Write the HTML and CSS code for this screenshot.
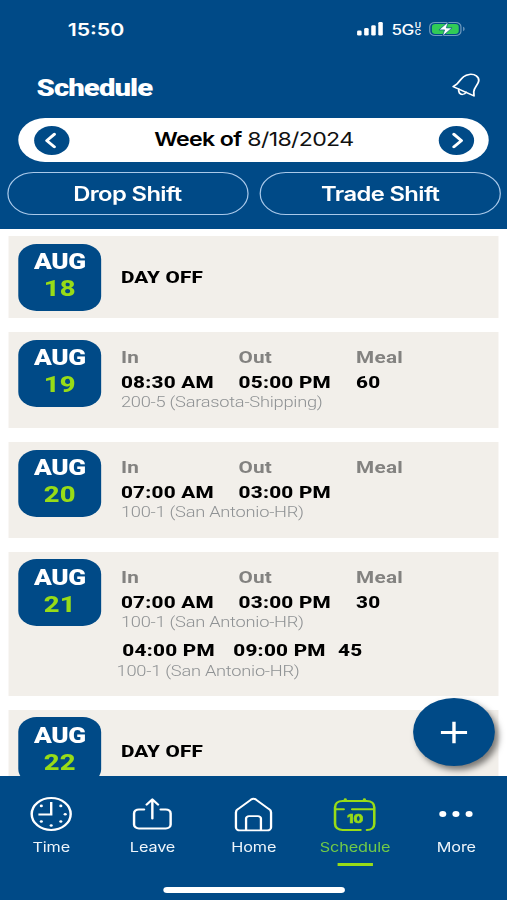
FILE: index.html
```html
<!DOCTYPE html>
<html lang="en">
<head>
<meta charset="utf-8">
<title>Schedule</title>
<link rel="stylesheet" href="styles.css">
</head>
<body>
<div class="screen">
  <header class="header">
    <div class="status">
      <span class="clock">15:50</span>
      <div class="indicators">
        <svg class="signal" width="22" height="14" viewBox="0 0 22 14" fill="#fff"><rect x="0" y="8.5" width="3.700" height="5" rx="1.2"/><rect x="5.8" y="6" width="3.700" height="7.5" rx="1.2"/><rect x="11.6" y="3.2" width="3.700" height="10.3" rx="1.2"/><rect x="17.4" y="0" width="3.700" height="13.5" rx="1.2"/></svg>
        <span class="network">5G</span>
        <span class="uc"><span>U</span><span>C</span></span>
        <svg class="battery" width="31" height="16" viewBox="0 0 31 16"><rect x=".6" y="1.4" width="25.6" height="13.2" rx="4.4" fill="none" stroke="#6f9abf" stroke-width="1"/><path d="M28 5.8c1.6.6 1.6 3.8 0 4.4z" fill="#6f9abf"/><rect x="2.4" y="3.1" width="22" height="9.8" rx="2.8" fill="#31cb57"/><path d="M15.8.8 8.2 8.9h4.6L11 15.2l7.9-8.3h-4.7z" fill="#fff" stroke="#004a87" stroke-width=".6"/></svg>
      </div>
    </div>
    <div class="title-row">
      <h1>Schedule</h1>
      <svg class="bell" width="25" height="26" viewBox="0 0 26 28" fill="none" stroke="#fff" stroke-width="1.6" stroke-linejoin="round" stroke-linecap="round"><path d="M1.500 15.800 5 12.800C8.500 8 10.500 3.200 15.800 2.600c5-.6 8.700 2.300 8.300 6.900-.4 4.200-4.500 7.200-4.400 11.800l.2 4.500z"/><path d="M6.500 18.500c-.7 3.300 1.100 5.800 3.300 5.600 1.500-.1 2.600-1 3.100-2.300"/></svg>
    </div>
    <div class="week">
      <span class="arrow"><svg width="29" height="29" viewBox="0 0 29 29"><path d="m16.600 8.300-6.200 6.300 6.200 6.300"/></svg></span>
      <span class="week-label"><b>Week of</b> 8/18/2024</span>
      <span class="arrow"><svg width="29" height="29" viewBox="0 0 29 29"><path d="m12.400 8.300 6.200 6.300-6.200 6.300"/></svg></span>
    </div>
    <div class="actions">
      <button class="drop">Drop Shift</button>
      <button class="trade">Trade Shift</button>
    </div>
  </header>

  <main class="days">
    <section class="card off">
      <div class="date"><span>AUG</span><b>18</b></div>
      <p class="day-off">DAY OFF</p>
    </section>
    <section class="card">
      <div class="date"><span>AUG</span><b>19</b></div>
      <div class="shifts">
        <div class="cols heads"><span>In</span><span>Out</span><span>Meal</span></div>
        <div class="cols times"><span>08:30 AM</span><span>05:00 PM</span><span>60</span></div>
        <p class="place">200-5 (Sarasota-Shipping)</p>
      </div>
    </section>
    <section class="card">
      <div class="date"><span>AUG</span><b>20</b></div>
      <div class="shifts">
        <div class="cols heads"><span>In</span><span>Out</span><span>Meal</span></div>
        <div class="cols times"><span>07:00 AM</span><span>03:00 PM</span></div>
        <p class="place">100-1 (San Antonio-HR)</p>
      </div>
    </section>
    <section class="card tall">
      <div class="date"><span>AUG</span><b>21</b></div>
      <div class="shifts">
        <div class="cols heads"><span>In</span><span>Out</span><span>Meal</span></div>
        <div class="cols times"><span>07:00 AM</span><span>03:00 PM</span><span>30</span></div>
        <p class="place">100-1 (San Antonio-HR)</p>
        <div class="cols times second"><span>04:00 PM</span><span>09:00 PM</span><span>45</span></div>
        <p class="place second-place">100-1 (San Antonio-HR)</p>
      </div>
    </section>
    <section class="card off">
      <div class="date"><span>AUG</span><b>22</b></div>
      <p class="day-off">DAY OFF</p>
    </section>
  </main>

  <div class="fab"><svg width="23" height="23" viewBox="0 0 24 24" stroke="#fff" stroke-width="2.900"><path d="M.8 12h22.400M12 .8v22.400"/></svg></div>

  <nav class="tabs">
    <a class="tab"><svg width="36" height="36" viewBox="0 0 36 36" fill="none" stroke="#fff" stroke-width="2"><circle cx="18" cy="18" r="16"/><path d="M18 6v12.500H7.500"/><g fill="#fff" stroke="none"><circle cx="25.900" cy="9.900" r="1.300"/><circle cx="29.500" cy="18.300" r="1.300"/><circle cx="25.900" cy="25.500" r="1.300"/><circle cx="18" cy="29.500" r="1.300"/><circle cx="9.900" cy="25.500" r="1.300"/><circle cx="9.900" cy="9.900" r="1.300"/></g></svg><span>Time</span></a>
    <a class="tab"><svg width="36" height="36" viewBox="0 0 36 36" fill="none" stroke="#fff" stroke-width="2" stroke-linecap="round" stroke-linejoin="round"><path d="M11.200 13.400H7a4 4 0 0 0-4 4v11a4 4 0 0 0 4 4h22a4 4 0 0 0 4-4v-11a4 4 0 0 0-4-4h-4.200M18 22.500V3.800M13.300 8.600 18 3.400l4.700 5.200"/></svg><span>Leave</span></a>
    <a class="tab"><svg width="36" height="36" viewBox="0 0 36 36" fill="none" stroke="#fff" stroke-width="1.900" stroke-linejoin="round"><path d="M3.600 16.400c0-1.500.6-2.500 1.700-3.300L16 3.600c1.300-1.100 2.700-1.100 4 0l10.700 9.500c1.100.8 1.700 1.800 1.700 3.300v14.800a3.200 3.200 0 0 1-3.200 3.200H6.800a3.200 3.200 0 0 1-3.200-3.200z"/><path d="M11.900 34V22.600a2.500 2.500 0 0 1 2.500-2.500h7.200a2.500 2.500 0 0 1 2.500 2.500V34"/></svg><span>Home</span></a>
    <a class="tab active"><svg width="36" height="36" viewBox="0 0 36 36" fill="none" stroke="#98dc17" stroke-width="2.100" stroke-linecap="round"><path d="M22.800 34H8.200c-3.800 0-6.300-2.500-6.300-6.300V11.500C1.900 7.500 4.200 5 8.200 5h19.600c4 0 6.300 2.500 6.300 6.500v16.200c0 3.800-2.500 6.300-6 6.300M2.500 13.200H9M16 13.200h17.500"/><path d="M10.300 4.200V3.500M26 4.200V3.500" stroke-width="2.600"/><text x="18.400" y="27" text-anchor="middle" fill="#98dc17" stroke="#98dc17" stroke-width=".6" class="cal-day">10</text></svg><span>Schedule</span></a>
    <a class="tab"><svg width="36" height="36" viewBox="0 0 36 36" fill="#fff"><circle cx="7.300" cy="18" r="2.900"/><circle cx="18.100" cy="18" r="2.900"/><circle cx="28.900" cy="18" r="2.900"/></svg><span>More</span></a>
    <div class="home-bar"></div>
  </nav>
</div>
</body>
</html>
```
FILE: styles.css
```css
:root {
  --blue: #004a87;
  --green: #98dc17;
}

* { box-sizing: border-box; }

html, body {
  margin: 0;
  height: 900px;
  overflow: hidden;
  background: #fff;
}

p, h1 { margin: 0; }

/* 416px design, stretched to fill the 507px viewport */
.screen {
  position: relative;
  display: flex;
  flex-direction: column;
  width: 416px;
  height: 900px;
  overflow: hidden;
  transform: scaleX(1.21875);
  transform-origin: 0 0;
  font-family: Roboto, "Liberation Sans", sans-serif;
}

.header {
  flex: none;
  height: 229.400px;
  background: var(--blue);
  color: #fff;
}

.status {
  display: flex;
  align-items: center;
  justify-content: space-between;
  height: 58px;
  padding: 0 33px 0 55.500px;
  font-family: Inter, sans-serif;
}

.clock {
  font-size: 17.500px;
  font-weight: 600;
}

.indicators { display: flex; align-items: center; }
.network { margin-left: 6px; font-size: 14px; font-weight: 500; letter-spacing: -.5px; }
.uc {
  display: flex;
  flex-direction: column;
  margin-left: 1px;
  font-size: 7px;
  font-weight: 600;
  line-height: 7px;
}
.battery { margin-left: 6.500px; }

.title-row {
  display: flex;
  align-items: center;
  justify-content: space-between;
  height: 60px;
  padding: 0 21px 0 30px;
}

h1 {
  font-size: 24px;
  font-weight: 900;
  line-height: 30px;
  letter-spacing: -.75px;
}

.bell { margin-top: -7px; }

.week {
  display: flex;
  align-items: center;
  justify-content: space-between;
  height: 44px;
  margin: 0 15px;
  padding: 0 12.200px 0 12.800px;
  border-radius: 22px;
  background: #fff;
  color: #111;
  font: 400 19px/44.500px Inter, sans-serif;
  letter-spacing: -.56px;
}

.week b { font-weight: 600; color: #000; }

.arrow {
  width: 29px;
  height: 29px;
  border-radius: 50%;
  background: var(--blue);
}

.arrow svg {
  display: block;
  fill: none;
  stroke: #fff;
  stroke-width: 2.700;
  stroke-linecap: round;
  stroke-linejoin: round;
}

.actions {
  display: grid;
  grid-template-columns: 1fr 1fr;
  gap: 9.500px;
  padding: 9.500px 5px 0 5.500px;
}

.actions button {
  height: 43.500px;
  padding: 1px 0 0;
  border: 1px solid #a9c9ea;
  border-radius: 22px;
  background: none;
  color: #fff;
  font: 600 19.500px/41px Inter, sans-serif;
  letter-spacing: -.5px;
}

.days {
  flex: 1;
  display: flex;
  flex-direction: column;
  gap: 13.500px;
  min-height: 0;
  padding: 7px 7px 0 7.400px;
  overflow: hidden;
}

.card {
  flex: none;
  display: flex;
  align-items: flex-start;
  gap: 16.300px;
  height: 96.400px;
  padding: 7.800px 8px;
  background: #f2efea;
}

.card.off { height: 82px; }
.card.tall { height: 144.500px; }

.date {
  flex: none;
  display: flex;
  flex-direction: column;
  align-items: center;
  width: 67.500px;
  height: 67px;
  padding-top: 4.300px;
  border-radius: 15px;
  background: var(--blue);
  color: #fff;
  font-size: 21.500px;
  font-weight: 900;
  line-height: 27px;
  letter-spacing: -.3px;
}

.date b {
  color: var(--green);
  font-size: 22.500px;
  font-weight: 800;
  line-height: 27px;
  letter-spacing: .2px;
}

.day-off {
  align-self: center;
  font-size: 17px;
  font-weight: 800;
  letter-spacing: .15px;
}

.shifts { padding-top: 5.500px; }

.cols {
  display: grid;
  grid-template-columns: 96.500px 96.500px auto;
  font-size: 17px;
  font-weight: 800;
  line-height: 25px;
  white-space: nowrap;
}

.times { letter-spacing: .2px; }

.heads { color: #838280; font-weight: 700; letter-spacing: .2px; }

.place {
  color: #8f9294;
  font-size: 15px;
  font-weight: 300;
  line-height: 14.600px;
  letter-spacing: -.22px;
}

.second {
  grid-template-columns: 91px 86px auto;
  margin: 8.600px 0 0 1.200px;
}

.second-place {
  margin-left: -3.500px;
  line-height: 17px;
}

.fab {
  position: absolute;
  right: 9.600px;
  bottom: 134px;
  display: grid;
  place-items: center;
  width: 67.600px;
  height: 67.600px;
  padding-top: 1px;
  border-radius: 50%;
  background: var(--blue);
  box-shadow: 3px 4px 6px rgba(0, 0, 0, .5);
}

.tabs {
  position: relative;
  flex: none;
  display: grid;
  grid-template-columns: repeat(5, 1fr);
  height: 124.500px;
  padding: 20.500px 0 0 .5px;
  background: var(--blue);
}

.tab {
  display: flex;
  flex-direction: column;
  align-items: center;
  color: #eef5fb;
  font: 400 13.300px/20px Inter, sans-serif;
}

.tab span { margin-top: 5px; letter-spacing: -.1px; }

.tab.active { color: #70cb48; }

.tab.active::after {
  content: "";
  width: 29.500px;
  height: 3.500px;
  margin-top: 5.500px;
  background: var(--green);
}

.cal-day {
  font: 800 11.500px Inter, sans-serif;
}

.home-bar {
  position: absolute;
  bottom: 7.500px;
  left: 134px;
  width: 149px;
  height: 5.500px;
  border-radius: 3px;
  background: #fff;
}
```
